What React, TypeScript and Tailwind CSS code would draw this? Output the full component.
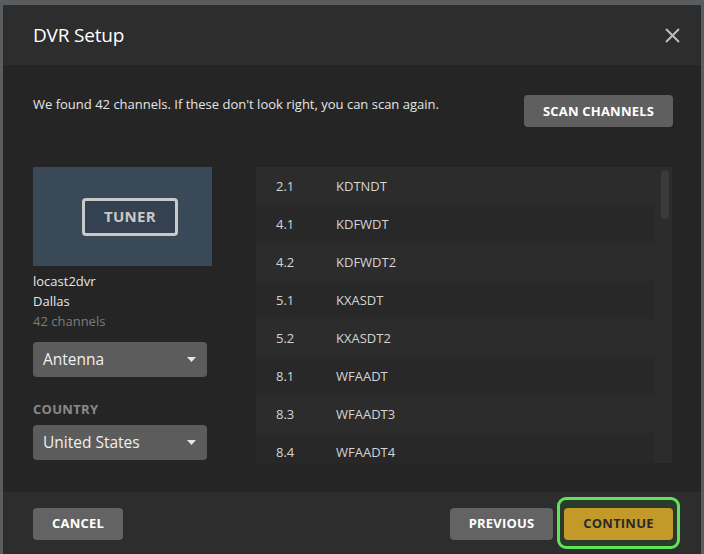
import React from 'react';

const channels = [
  ['2.1', 'KDTNDT'],
  ['4.1', 'KDFWDT'],
  ['4.2', 'KDFWDT2'],
  ['5.1', 'KXASDT'],
  ['5.2', 'KXASDT2'],
  ['8.1', 'WFAADT'],
  ['8.3', 'WFAADT3'],
  ['8.4', 'WFAADT4'],
];

const Caret: React.FC = () => (
  <svg width="9" height="5" viewBox="0 0 9 5" className="shrink-0">
    <path d="M0 0h9L4.5 5z" fill="#e6e6e6" />
  </svg>
);

const Select: React.FC<{ value: string }> = ({ value }) => (
  <div className="h-[35px] rounded-[4px] bg-[#5c5c5c] flex items-center justify-between pl-[10px] pr-[11px] text-[15.5px] text-[#f0f0f0]">
    <span>{value}</span>
    <Caret />
  </div>
);

const App: React.FC = () => {
  return (
    <div
      className="w-[704px] h-[554px] bg-[#5a5d60] pt-[5px] pl-[3px] pr-[3px] overflow-hidden"
      style={{ fontFamily: '"Open Sans", "Noto Sans", sans-serif' }}
    >
      <div className="h-full flex flex-col">
        {/* header */}
        <div className="h-[60px] shrink-0 bg-[#2d2d2d] flex items-center justify-between pl-[30px] pr-[21px]">
          <h1 className="text-[19px] text-white tracking-[-0.2px]">DVR Setup</h1>
          <svg width="15" height="15" viewBox="0 0 15 15">
            <path d="M1 1l13 13M14 1L1 14" stroke="#bdbdbd" strokeWidth="2" />
          </svg>
        </div>

        {/* body */}
        <div className="flex-1 bg-[#252525] pl-[30px] pr-[28px] pt-[30px]">
          <div className="flex items-start justify-between">
            <p className="text-[13px] text-[#e6e6e6]">
              We found 42 channels. If these don't look right, you can scan again.
            </p>
            <button className="h-[32px] w-[149px] pt-[1px] rounded-[4px] bg-[#5f5f5f] text-white text-[13px] font-bold tracking-[0.2px]">
              SCAN CHANNELS
            </button>
          </div>

          <div className="flex mt-[40px]">
            <div className="w-[179px] shrink-0 mr-[44px]">
              <div className="h-[99px] bg-[#3a4957] flex items-center pl-[49px]">
                <div className="w-[96px] h-[38px] rounded-[4px] border-[3px] border-[#c9c9c9] bg-[#334150] flex items-center justify-center text-[15px] font-bold text-[#c9c9c9] tracking-[0.3px]">
                  TUNER
                </div>
              </div>
              <div className="mt-[5px] text-[13px] leading-[20px] text-[#e6e6e6]">locast2dvr</div>
              <div className="text-[13px] leading-[20px] text-[#e6e6e6]">Dallas</div>
              <div className="text-[13px] leading-[20px] text-[#7c7c7c]">42 channels</div>
              <div className="mt-[11px] w-[174px]">
                <Select value="Antenna" />
              </div>
              <div className="mt-[22px] text-[13px] font-bold text-[#8a8a8a] tracking-[0.3px] leading-[20px]">COUNTRY</div>
              <div className="mt-[6px] w-[174px]">
                <Select value="United States" />
              </div>
            </div>

            <div className="relative w-[416px] h-[296px] bg-[#2c2c2c] overflow-hidden">
              {channels.map(([num, name], i) => (
                <div
                  key={num}
                  className={`h-[38px] w-[398px] pt-[1px] flex items-center text-[13px] text-[#d4d4d4] ${
                    i % 2 === 1 ? 'bg-[#282828]' : 'bg-[#2c2c2c]'
                  }`}
                >
                  <span className="w-[80px] pl-[20px]">{num}</span>
                  <span>{name}</span>
                </div>
              ))}
              <div className="absolute top-[3px] right-[3px] w-[8px] h-[49px] rounded-full bg-[#3a3a3a]" />
            </div>
          </div>
        </div>

        {/* footer */}
        <div className="h-[62px] shrink-0 bg-[#2d2d2d] flex items-center justify-between pl-[30px] pr-[28px] pt-[1px]">
          <button className="h-[32px] w-[90px] pt-[1px] rounded-[4px] bg-[#636363] text-white text-[13px] font-bold tracking-[0.2px]">
            CANCEL
          </button>
          <div className="flex items-center gap-[11px]">
            <button className="h-[32px] w-[103px] pt-[1px] rounded-[4px] bg-[#636363] text-white text-[13px] font-bold tracking-[0.2px]">
              PREVIOUS
            </button>
            <div className="relative">
              <span className="absolute left-[-7px] right-[-7px] top-[-11px] bottom-[-9px] rounded-[9px] border-[3px] border-[#5fe35a] bg-[#2c3a2b]" />
              <button className="relative h-[32px] w-[109px] pt-[1px] rounded-[4px] bg-[#c3992a] text-[#2a2a2a] text-[13px] font-bold tracking-[0.2px]">
                CONTINUE
              </button>
            </div>
          </div>
        </div>
      </div>
    </div>
  );
};

export default App;
